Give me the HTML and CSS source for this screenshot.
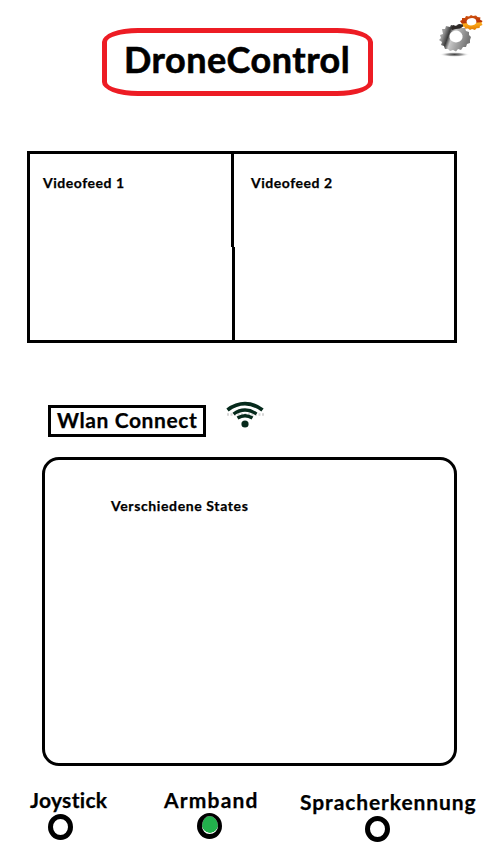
FILE: index.html
```html
<!DOCTYPE html>
<html lang="de">
<head>
<meta charset="utf-8">
<title>DroneControl</title>
<link rel="stylesheet" href="styles.css">
</head>
<body>
<header class="header">
  <h1 class="title">DroneControl</h1>
  <svg class="gears" width="50" height="50" viewBox="0 0 50 50">
    <defs>
      <linearGradient id="steel" x1="0" y1="0" x2="1" y2="0.3">
        <stop offset="0" stop-color="#b8b8b8"/><stop offset=".22" stop-color="#999"/>
        <stop offset=".38" stop-color="#3c3c3c"/><stop offset=".5" stop-color="#c8c8c8"/>
        <stop offset=".7" stop-color="#a5a5a5"/><stop offset="1" stop-color="#777"/>
      </linearGradient>
      <linearGradient id="flame" x1="0" y1="0" x2="0.1" y2="1">
        <stop offset="0" stop-color="#d4560f"/><stop offset=".55" stop-color="#b83406"/>
        <stop offset=".6" stop-color="#ffb01c"/><stop offset="1" stop-color="#e57f04"/>
      </linearGradient>
      <radialGradient id="shade"><stop offset="0" stop-color="#444"/><stop offset=".5" stop-color="#999"/><stop offset="1" stop-color="#fff" stop-opacity="0"/></radialGradient>
    </defs>
    <ellipse cx="18.500" cy="39.500" rx="15" ry="2.500" fill="url(#shade)"/>
    <path fill="url(#flame)" fill-rule="evenodd" d="M24 6l2-1 0-2 3 0 1-2 3 .5L35 0l2 1 3-.5 1.500 1.500 3 .5-.5 2 2.500 1.500-1 2 1 2-2.500 1-.5 2-3 .3-1.500 1.700-3-1-2 1-2-1.500-3 .2-.5-2-3 0 1-2zM30.700 7.500a4.800 3.500 0 1 0 9.600-1.500a4.800 3.500 0 1 0-9.600 1.500z"/>
    <path fill="url(#steel)" fill-rule="evenodd" d="M6 14l3 0 1-3 4 1 1-2 4 1 3-2 3 1 1 3 3 0 1 3 3 1 0 3 2 2-1 3 0 3-3 1-1 3-3 0-2 3-3-1-2 2.500-3-1.500-3 1-2-2-3 0-1-3-3-1 1-3-3-2 2-2-1-3 3-1zM13.500 22.500a6.500 5.800 0 1 0 13-2a6.500 5.800 0 1 0-13 2z"/>
    <path d="M15 13l2-3 3 1 3-2 4 .5 0 2-3 2-4 .5-4 1z" fill="#2d2927"/>
  </svg>
</header>

<main>
  <section class="feeds">
    <div class="feed">Videofeed 1</div>
    <div class="divider"><i></i><i></i></div>
    <div class="feed">Videofeed 2</div>
  </section>

  <div class="connection">
    <button class="connect">Wlan Connect</button>
    <svg class="wifi" width="38" height="28" viewBox="0 0 38 28">
      <path d="M1 13.500h37" stroke="#d5d5d5" stroke-width="2.500" stroke-dasharray="2 1.500"/>
      <g fill="none" stroke="#062a1c">
        <path d="M1.500 9Q10 2.700 19 2.700T36.500 9" stroke-width="3.800"/>
        <path d="M7.500 13Q13 9 19 9T30.500 13" stroke-width="3.300"/>
        <path d="M11.500 17Q15.500 14.700 19 14.700T26.500 17" stroke-width="3.500"/>
      </g>
      <circle cx="19" cy="23" r="3.600" fill="#062a1c"/>
    </svg>
  </div>

  <section class="states">Verschiedene States</section>
</main>

<footer class="modes">
  <div class="mode joystick"><span>Joystick</span><i class="ring"></i></div>
  <div class="mode armband"><span>Armband</span><i class="ring active"></i></div>
  <div class="mode speech"><span>Spracherkennung</span><i class="ring"></i></div>
</footer>
</body>
</html>
```
FILE: styles.css
```css
* { box-sizing: border-box; }

body {
  margin: 0;
  width: 500px;
  height: 850px;
  overflow: hidden;
  background: #fff;
  color: #000;
  font-family: Lato, "Liberation Sans", sans-serif;
  font-weight: 700;
  -webkit-text-stroke: 0.25px #000;
}

.header {
  display: flex;
  align-items: flex-start;
  height: 151px;
  padding: 11px 0 0 102px;
}

.title {
  width: 271px;
  height: 68px;
  margin: 17px 0 0;
  padding: 5px 0 0 17px;
  border: 5px solid #ed1c24;
  border-radius: 36px / 14px;
  font-size: 36px;
  line-height: 42px;
  letter-spacing: 0.5px;
  white-space: nowrap;
  -webkit-text-stroke-width: 0.6px;
}

.gears { margin: 4px 0 0 63px; }

.feeds {
  display: flex;
  width: 430px;
  height: 192px;
  margin-left: 27px;
  border: 3px solid #000;
}

.feed {
  width: 201px;
  padding: 19px 0 0 13px;
  font-size: 14px;
  line-height: 20px;
  letter-spacing: 0.52px;
  white-space: nowrap;
}

.divider {
  display: flex;
  flex-direction: column;
  width: 4px;
}

.divider i { width: 3px; height: 93px; background: #000; }
.divider i + i { margin-left: 1px; }
.divider + .feed { padding-left: 16px; }

.connection {
  display: flex;
  align-items: flex-start;
  height: 56px;
  margin: 58px 0 0 48px;
}

.connect {
  width: 158px;
  height: 32px;
  margin: 4px 0 0;
  padding: 0 0 3px 6px;
  border: 3px solid #000;
  background: #fff;
  color: #000;
  font: inherit;
  font-size: 21px;
  line-height: 24px;
  letter-spacing: 0.58px;
  text-align: left;
  white-space: nowrap;
}

.wifi { margin-left: 20px; }

.states {
  width: 415px;
  height: 309px;
  padding: 36px 0 0 66px;
  border: 3px solid #000;
  border-radius: 17px;
  margin-left: 42px;
  font-size: 14px;
  line-height: 20px;
  letter-spacing: 0.62px;
}

.modes {
  display: flex;
  align-items: flex-start;
  padding-left: 30px;
}

.mode {
  display: flex;
  flex-direction: column;
  font-size: 21px;
  line-height: 26px;
  white-space: nowrap;
}

.ring {
  width: 25px;
  height: 26px;
  border: 5px solid #000;
  border-radius: 50%;
}

.active {
  border-width: 3px 4px 5px 5px;
  background: radial-gradient(ellipse 8.500px 9px at 8px 8px, #22b14c 94%, #fff 100%) padding-box;
}

.joystick { width: 134px; padding-top: 21px; letter-spacing: 0.3px; }
.joystick .ring { margin: 1px 0 0 18px; }
.armband { width: 136px; padding-top: 21px; letter-spacing: 1.2px; }
.armband .ring { margin-left: 33px; }
.speech { padding-top: 23px; letter-spacing: 0.9px; }
.speech .ring { margin: 1px 0 0 65px; }
```
